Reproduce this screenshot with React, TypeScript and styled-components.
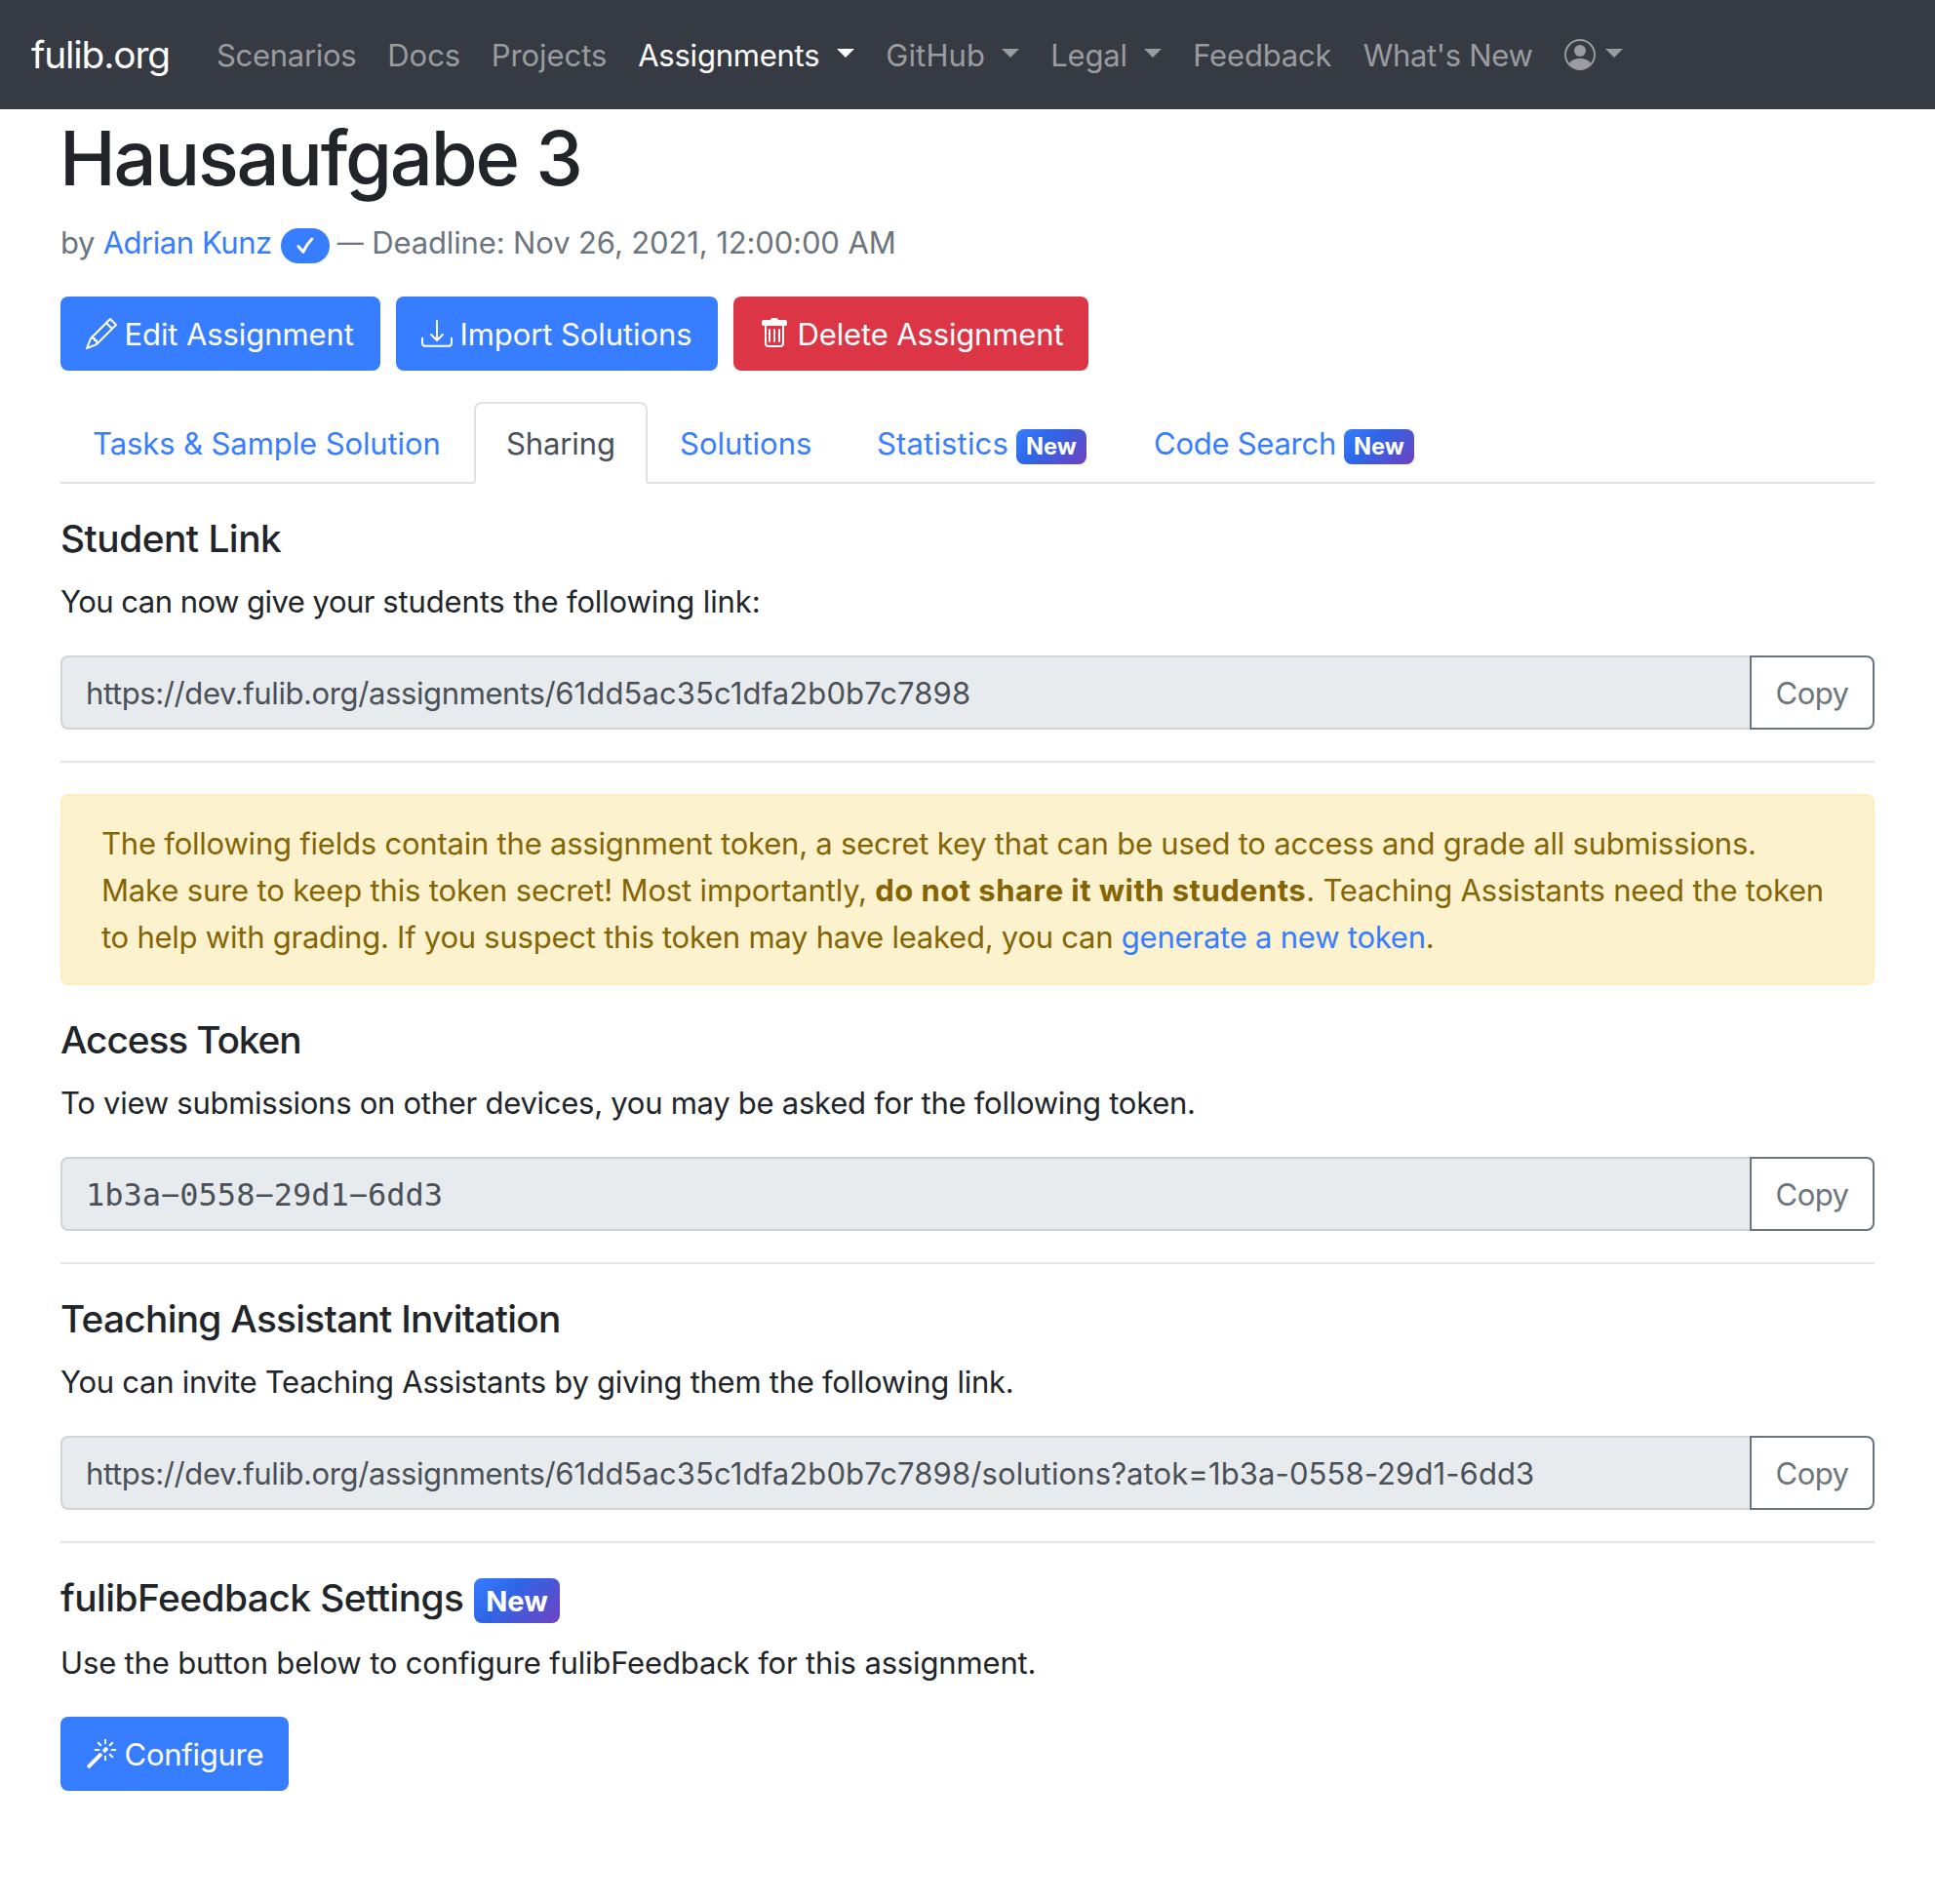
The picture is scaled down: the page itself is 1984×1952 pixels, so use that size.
import React from "react";
import styled, { createGlobalStyle, css } from "styled-components";
import { BsPencil, BsDownload, BsPersonCircle, BsMagic } from "react-icons/bs";

const color = {
  primary: "#377dff",
  danger: "#dc3545",
  dark: "#363a42",
  body: "#212529",
  muted: "#6c757d",
  border: "#dee2e6",
};

const GlobalStyle = createGlobalStyle`
  *, *::before, *::after { box-sizing: border-box; }
  body {
    --nudge: 1px;
    margin: 0;
    background: #fff;
    color: ${color.body};
    font-family: Inter, "Liberation Sans", sans-serif;
    font-size: 31.04px;
    line-height: 48px;
  }
  h1, h5, p { margin: 0; }
  svg { display: block; flex: none; }
`;

/* Text run with its own tracking, in thousandths of an em */
const T = styled.span<{ $t?: number }>`
  display: inline-block;
  padding-top: var(--nudge);
  margin-bottom: calc(-1 * var(--nudge));
  letter-spacing: ${(p) => (p.$t ?? -6) / 1000}em;
  white-space: pre;
`;

const Navbar = styled.nav`
  display: flex;
  align-items: center;
  height: 112px;
  padding: 0 32px;
  background: ${color.dark};
`;

const Brand = styled.a`
  --nudge: 0px;
  width: 142px;
  margin-right: 48px;
  color: #fff;
  font-size: 38.8px;
  line-height: 60px;
`;

const NavList = styled.div`
  display: flex;
  gap: 32px;
`;

const NavLink = styled.a<{ $active?: boolean; $width: number }>`
  display: flex;
  align-items: center;
  width: ${(p) => p.$width}px;
  color: ${(p) => (p.$active ? "#fff" : "#9a9c9f")};
`;

const Caret = styled.span`
  margin-left: auto;
  margin-bottom: 3px;
  border-top: 9.6px solid;
  border-left: 9.6px solid transparent;
  border-right: 9.6px solid transparent;
`;

const Main = styled.main`
  padding: 0 62px;
`;

const Title = styled.h1`
  --nudge: 0px;
  height: 112px;
  margin-left: -1px;
  padding-top: 2px;
  font-size: 77.6px;
  font-weight: 500;
  line-height: 96px;
`;

const Byline = styled.div`
  display: flex;
  height: 80px;
  color: ${color.muted};
`;

const Author = styled.a`
  width: 182px;
  color: ${color.primary};
`;

const Dash = styled.span`
  width: 35.5px;
  font-size: 27px;
`;

const VerifiedPill = styled.span`
  display: flex;
  align-items: center;
  justify-content: center;
  width: 50px;
  height: 36px;
  margin: 10px 8px 0 0;
  border-radius: 18px;
  background: ${color.primary};
  color: #fff;
`;

const ButtonRow = styled.div`
  display: flex;
  gap: 16px;
`;

const Button = styled.button<{ $danger?: boolean; $width: number }>`
  display: flex;
  align-items: center;
  gap: 8px;
  width: ${(p) => p.$width}px;
  height: 76px;
  padding: 0 0 0 25.5px;
  border: 0;
  border-radius: 8px;
  background: ${(p) => (p.$danger ? color.danger : color.primary)};
  color: #fff;
  font: inherit;
`;

const Tabs = styled.div`
  display: flex;
  height: 84px;
  margin-top: 32px;
  border-bottom: 2px solid ${color.border};
`;

const Tab = styled.a<{ $active?: boolean; $width: number }>`
  display: flex;
  width: ${(p) => p.$width}px;
  height: 84px;
  padding: 16px 0 16px 31px;
  border: 2px solid transparent;
  border-radius: 8px 8px 0 0;
  color: ${color.primary};
  ${(p) =>
    p.$active &&
    css`
      border-color: ${color.border} ${color.border} #fff;
      background: #fff;
      color: #495057;
    `}
`;

const NewBadge = styled.span<{ $large?: boolean }>`
  display: flex;
  align-items: center;
  justify-content: center;
  width: ${(p) => (p.$large ? 88 : 72)}px;
  height: ${(p) => (p.$large ? 46 : 36)}px;
  margin: ${(p) => (p.$large ? "4px 0 0 auto" : "10px 34px 0 auto")};
  padding-bottom: ${(p) => (p.$large ? 0 : 1)}px;
  border-radius: 8px;
  background: linear-gradient(135deg, #377dff 0%, #2f65e6 40%, #6f42c1 100%);
  color: #fff;
  font-size: ${(p) => (p.$large ? 29 : 23.6)}px;
  font-weight: 700;
  line-height: 1;
`;

const Section = styled.section`
  padding-top: 32px;
`;

const Heading = styled.h5<{ $width?: number; $height?: number }>`
  --nudge: 0px;
  display: flex;
  width: ${(p) => (p.$width ? `${p.$width}px` : "auto")};
  height: ${(p) => p.$height ?? 48}px;
  margin-bottom: 16px;
  font-size: 38.8px;
  font-weight: 500;
`;

const Paragraph = styled.p`
  display: flex;
  height: 48px;
  margin-bottom: 32px;
`;

const InputGroup = styled.div`
  display: flex;
  height: 76px;
`;

const Field = styled.div<{ $mono?: boolean }>`
  display: flex;
  flex: 1;
  padding: 12px 24px;
  border: 2px solid #ced4da;
  border-right: 0;
  border-radius: 8px 0 0 8px;
  background: #e8ebee;
  color: #495057;
  ${(p) =>
    p.$mono &&
    css`
      font-family: "DejaVu Sans Mono", monospace;
      font-size: 32px;
    `}
`;

const CopyButton = styled.button`
  display: flex;
  align-items: center;
  justify-content: center;
  width: 128px;
  padding: 0;
  border: 2px solid ${color.muted};
  border-radius: 0 8px 8px 0;
  background: #fff;
  color: ${color.muted};
  font: inherit;
`;

const Rule = styled.hr`
  height: 2px;
  margin: 32px 0 0;
  border: 0;
  background: #e5e5e5;
`;

const Alert = styled.div`
  height: 196px;
  margin-top: 32px;
  padding: 24px 40px;
  border: 2px solid #ffeeba;
  border-radius: 8px;
  background: #fdf2ce;
  color: #856404;
`;

const AlertLine = styled.div`
  display: flex;
  height: 48px;
`;

const Strong = styled.b`
  font-weight: 700;
`;

const AlertLink = styled.a`
  color: ${color.primary};
`;

const TrashIcon = () => (
  <svg width="32" height="32" viewBox="0 0 16 16" fill="currentColor">
    <path d="M5.5 5.5A.5.5 0 0 1 6 6v6a.5.5 0 0 1-1 0V6a.5.5 0 0 1 .5-.5zm2.5 0a.5.5 0 0 1 .5.5v6a.5.5 0 0 1-1 0V6a.5.5 0 0 1 .5-.5zm3 .5a.5.5 0 0 0-1 0v6a.5.5 0 0 0 1 0V6z" />
    <path
      fillRule="evenodd"
      d="M14.5 3a1 1 0 0 1-1 1H13v9a2 2 0 0 1-2 2H5a2 2 0 0 1-2-2V4h-.5a1 1 0 0 1-1-1V2a1 1 0 0 1 1-1H6a1 1 0 0 1 1-1h2a1 1 0 0 1 1 1h3.5a1 1 0 0 1 1 1v1zM4.118 4L4 4.059V13a1 1 0 0 0 1 1h6a1 1 0 0 0 1-1V4.059L11.882 4H4.118z"
    />
  </svg>
);

const CheckIcon = () => (
  <svg width="18" height="18" viewBox="0 0 18 18" fill="none" stroke="currentColor" strokeWidth="3" strokeLinecap="round" strokeLinejoin="round">
    <path d="M2 9.6L6.9 15.4Q10.5 7.5 15.8 2" />
  </svg>
);

const navItems = [
  { label: "Scenarios", t: -10, width: 143.2 },
  { label: "Docs", t: -1, width: 74.5 },
  { label: "Projects", t: -2, width: 118.5 },
  { label: "Assignments", t: -8, width: 222, caret: true, active: true },
  { label: "GitHub", t: 4, width: 137, caret: true },
  { label: "Legal", t: -6, width: 114, caret: true },
  { label: "Feedback", t: -6, width: 142.5 },
  { label: "What's New", t: -11, width: 174 },
];

type Run = { text: string; t: number };

const studentLink: Run[] = [
  { text: "https://dev.fulib.org/assignments/", t: -13 },
  { text: "61dd5ac35c1dfa2b0b7c7898", t: 3.2 },
];

const accessToken: Run[] = [{ text: "1b3a−0558−29d1−6dd3", t: 0 }];

const invitationLink: Run[] = [...studentLink, { text: "/solutions?atok=1b3a-0558-29d1-6dd3", t: 2.8 }];

function CopyField({ runs, mono }: { runs: Run[]; mono?: boolean }) {
  return (
    <InputGroup>
      <Field $mono={mono}>
        {runs.map((run) => (
          <T key={run.text} $t={run.t}>
            {run.text}
          </T>
        ))}
      </Field>
      <CopyButton>
        <T $t={-18}>Copy</T>
      </CopyButton>
    </InputGroup>
  );
}

export default function App() {
  return (
    <>
      <GlobalStyle />
      <Navbar>
        <Brand>
          <T $t={-29}>fulib.org</T>
        </Brand>
        <NavList>
          {navItems.map((item) => (
            <NavLink key={item.label} $active={item.active} $width={item.width}>
              <T $t={item.t}>{item.label}</T>
              {item.caret && <Caret />}
            </NavLink>
          ))}
          <NavLink $width={60}>
            <BsPersonCircle size={32} />
            <Caret />
          </NavLink>
        </NavList>
      </Navbar>
      <Main>
        <Title>
          <T $t={-28.5}>Hausaufgabe 3</T>
        </Title>
        <Byline>
          <T $t={-10}>by </T>
          <Author>
            <T $t={-15}>Adrian Kunz</T>
          </Author>
          <VerifiedPill>
            <CheckIcon />
          </VerifiedPill>
          <Dash>
            <T $t={0}>—</T>
          </Dash>
          <T $t={-4.5}>Deadline: Nov 26, 2021, 12:00:00 AM</T>
        </Byline>
        <ButtonRow>
          <Button $width={328}>
            <BsPencil size={32} />
            <T $t={-3.5}>Edit Assignment</T>
          </Button>
          <Button $width={330}>
            <BsDownload size={32} />
            <T $t={-3}>Import Solutions</T>
          </Button>
          <Button $danger $width={364}>
            <TrashIcon />
            <T $t={-5}>Delete Assignment</T>
          </Button>
        </ButtonRow>
        <Tabs>
          <Tab $width={424}>
            <T $t={-3.5}>Tasks &amp; Sample Solution</T>
          </Tab>
          <Tab $active $width={178}>
            <T $t={-4}>Sharing</T>
          </Tab>
          <Tab $width={202}>
            <T $t={0}>Solutions</T>
          </Tab>
          <Tab $width={284}>
            <T $t={5}>Statistics</T>
            <NewBadge>New</NewBadge>
          </Tab>
          <Tab $width={336}>
            <T $t={-9}>Code Search</T>
            <NewBadge>New</NewBadge>
          </Tab>
        </Tabs>

        <Section>
          <Heading>
            <T $t={-12.5}>Student Link</T>
          </Heading>
          <Paragraph>
            <T $t={-17}>You can now give your </T>
            <T $t={-4.5}>students the following link:</T>
          </Paragraph>
          <CopyField runs={studentLink} />
          <Rule />
        </Section>

        <Alert>
          <AlertLine>
            <T $t={-7.3}>
              The following fields contain the assignment token, a secret key that can be used to access and grade all submissions.
            </T>
          </AlertLine>
          <AlertLine>
            <T $t={-5.7}>Make sure to keep this token secret! Most importantly, </T>
            <Strong>
              <T $t={13.8}>do not share it with students</T>
            </Strong>
            <T $t={-7}>. Teaching Assistants need the token</T>
          </AlertLine>
          <AlertLine>
            <T $t={-8.2}>to help with grading. If you suspect this token may have leaked, you can </T>
            <AlertLink>
              <T $t={-7.5}>generate a new token</T>
            </AlertLink>
            <T>.</T>
          </AlertLine>
        </Alert>

        <Section>
          <Heading>
            <T $t={-28}>Access Token</T>
          </Heading>
          <Paragraph>
            <T $t={-9}>To view submissions on other devices, you may be asked for the following token.</T>
          </Paragraph>
          <CopyField mono runs={accessToken} />
          <Rule />
        </Section>

        <Section>
          <Heading>
            <T $t={-18.5}>Teaching Assistant Invitation</T>
          </Heading>
          <Paragraph>
            <T $t={-9}>You can invite Teaching Assistants by giving them the following link.</T>
          </Paragraph>
          <CopyField runs={invitationLink} />
          <Rule />
        </Section>

        <Section>
          <Heading $width={512} $height={50}>
            <T $t={-13.2}>fulibFeedback Settings</T>
            <NewBadge $large>New</NewBadge>
          </Heading>
          <Paragraph>
            <T $t={-5.4}>Use the button below to configure fulibFeedback for this assignment.</T>
          </Paragraph>
          <Button $width={234}>
            <BsMagic size={32} />
            <T $t={-9}>Configure</T>
          </Button>
        </Section>
      </Main>
    </>
  );
}
